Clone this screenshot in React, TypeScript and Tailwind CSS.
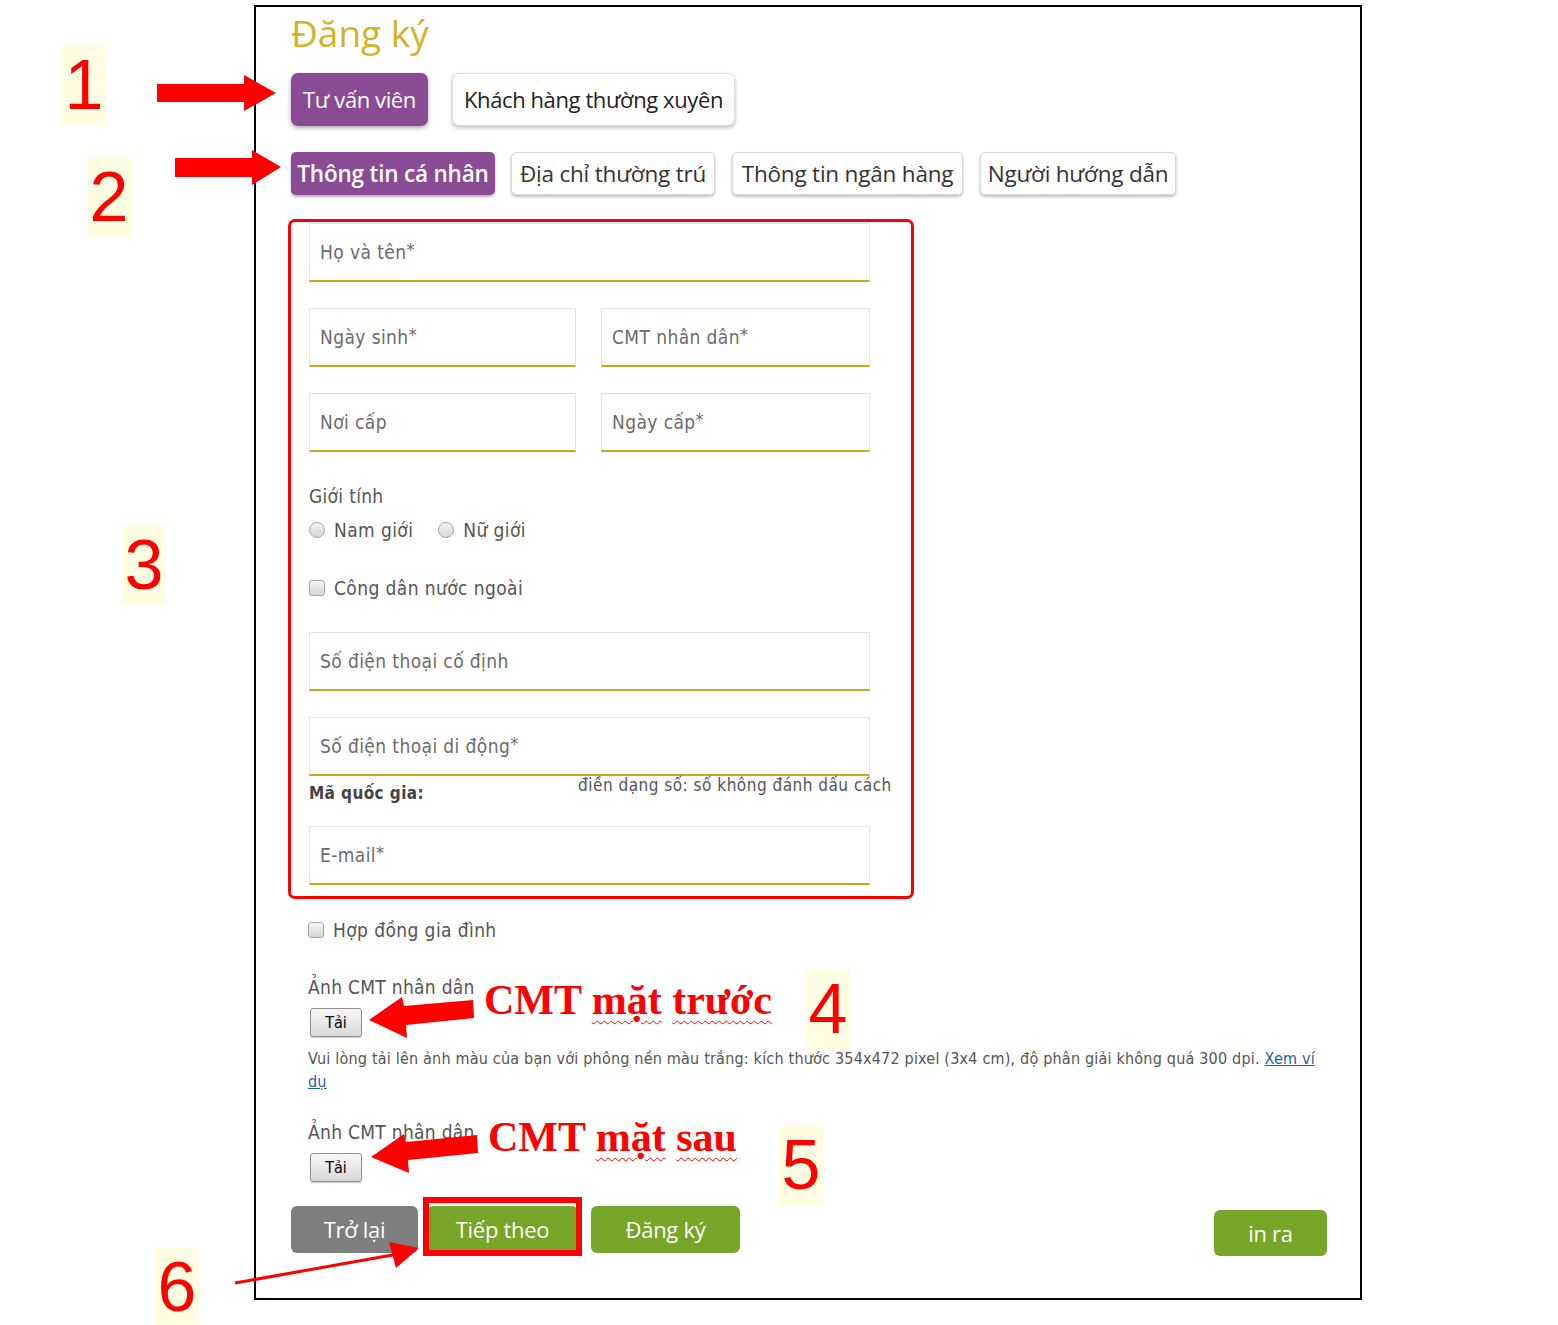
import React from 'react';

const uiFont = "font-['DejaVu_Sans_Condensed','Liberation_Sans',sans-serif]";
const btnFont = "font-['Open_Sans','Liberation_Sans',sans-serif]";

const Field: React.FC<{ label: string; star?: boolean; className?: string }> = ({ label, star, className = '' }) => (
  <div
    className={`h-[59px] flex items-center pl-[10px] border border-[#e4e4e4] border-b-2 border-b-[#c8a81c] bg-white text-[19px] tracking-[0.4px] text-[#6b6b6b] ${uiFont} ${className}`}
  >
    {label}
    {star && <span className="relative -top-[3px] text-[18px]">*</span>}
  </div>
);

const Radio: React.FC<{ label: string }> = ({ label }) => (
  <div className="flex items-center">
    <span className="w-[16px] h-[16px] rounded-full border border-[#a5a5a5] bg-gradient-to-b from-[#f4f4f4] to-[#d6d6d6]" />
    <span className="ml-[9px]">{label}</span>
  </div>
);

const Check: React.FC<{ label: string }> = ({ label }) => (
  <div className={`flex items-center h-[24px] text-[19px] tracking-[0.4px] text-[#555] ${uiFont}`}>
    <span className="w-[16px] h-[16px] rounded-[3px] border border-[#a5a5a5] bg-gradient-to-b from-[#f4f4f4] to-[#d6d6d6]" />
    <span className="ml-[9px]">{label}</span>
  </div>
);

const Upload: React.FC = () => (
  <>
    <div className={`h-[24px] leading-[24px] text-[19px] tracking-[0.3px] text-[#555] ${uiFont}`}>Ảnh CMT nhân dân</div>
    <div className="mt-[9px] ml-[2px] w-[52px] h-[29px] flex items-center justify-center rounded-[3px] border border-[#8f8f8f] bg-gradient-to-b from-[#f7f7f7] to-[#d9d9d9] shadow-[0_1px_1px_rgba(0,0,0,0.2)] text-[16px] text-black font-['DejaVu_Sans_Condensed',sans-serif]">
      Tải
    </div>
  </>
);

const NumberTag: React.FC<{ n: string; className: string }> = ({ n, className }) => (
  <div
    className={`absolute w-[44px] h-[80px] bg-[#fffde2] flex items-center justify-center text-[70px] leading-none text-[#ff0000] font-['Liberation_Sans',Arial,sans-serif] ${className}`}
  >
    {n}
  </div>
);

const App: React.FC = () => {
  return (
    <div className="relative w-[1558px] h-[1325px] overflow-hidden bg-white">
      {/* Screenshot frame */}
      <div className="ml-[254px] mt-[5px] w-[1108px] h-[1295px] border-2 border-black pl-[35px]">
        <h1 className={`h-[52px] leading-[52px] text-[37px] text-[#d4b22a] ${btnFont}`}>Đăng ký</h1>

        {/* Account type */}
        <div className={`mt-[14px] flex text-[22px] tracking-[-0.4px] ${btnFont}`}>
          <div className="w-[137px] h-[53px] flex items-center justify-center rounded-[7px] bg-[#8a4b94] text-white shadow-[0_2px_4px_rgba(0,0,0,0.35)]">
            Tư vấn viên
          </div>
          <div className="ml-[24px] w-[283px] h-[53px] flex items-center justify-center rounded-[7px] bg-white border border-[#dedede] text-[#222] shadow-[0_2px_4px_rgba(0,0,0,0.25)]">
            Khách hàng thường xuyên
          </div>
        </div>

        {/* Steps */}
        <div className={`mt-[26px] flex text-[22.5px] tracking-[-0.2px] ${btnFont}`}>
          <div className="w-[204px] h-[43px] flex items-center justify-center rounded-[5px] bg-[#8a4b94] text-white font-semibold shadow-[0_2px_3px_rgba(0,0,0,0.3)]">
            Thông tin cá nhân
          </div>
          <div className="ml-[16px] w-[204px] h-[43px] flex items-center justify-center rounded-[5px] bg-white border border-[#d6d6d6] text-[#333] shadow-[0_2px_3px_rgba(0,0,0,0.25)]">
            Địa chỉ thường trú
          </div>
          <div className="ml-[17px] w-[231px] h-[43px] flex items-center justify-center rounded-[5px] bg-white border border-[#d6d6d6] text-[#333] shadow-[0_2px_3px_rgba(0,0,0,0.25)]">
            Thông tin ngân hàng
          </div>
          <div className="ml-[17px] w-[196px] h-[43px] flex items-center justify-center rounded-[5px] bg-white border border-[#d6d6d6] text-[#333] shadow-[0_2px_3px_rgba(0,0,0,0.25)]">
            Người hướng dẫn
          </div>
        </div>

        {/* Personal info form */}
        <div className="mt-[28px] ml-[18px] w-[561px]">
          <Field label="Họ và tên" star />
          <div className="mt-[26px] grid grid-cols-[267px_269px] gap-x-[25px] gap-y-[26px]">
            <Field label="Ngày sinh" star />
            <Field label="CMT nhân dân" star />
            <Field label="Nơi cấp" />
            <Field label="Ngày cấp" star />
          </div>

          <div className={`mt-[32px] h-[24px] leading-[24px] text-[19px] tracking-[0.3px] text-[#555] ${uiFont}`}>Giới tính</div>
          <div className={`mt-[10px] h-[24px] flex items-center gap-[25px] text-[19px] tracking-[0.4px] text-[#555] ${uiFont}`}>
            <Radio label="Nam giới" />
            <Radio label="Nữ giới" />
          </div>

          <div className="mt-[34px]">
            <Check label="Công dân nước ngoài" />
          </div>

          <Field label="Số điện thoại cố định" className="mt-[32px]" />
          <Field label="Số điện thoại di động" star className="mt-[26px]" />

          <div className={`flex w-[620px] h-[30px] ${uiFont}`}>
            <div className="w-[269px] mt-[8px] leading-[18px] text-[17px] tracking-[0.4px] font-bold text-[#444]">Mã quốc gia:</div>
            <div className="leading-[18px] text-[17px] tracking-[0.5px] text-[#555] whitespace-nowrap">điền dạng số: số không đánh dấu cách</div>
          </div>

          <Field label="E-mail" star className="mt-[20px]" />
        </div>

        {/* Extra */}
        <div className="ml-[17px]">
          <div className="mt-[33px]">
            <Check label="Hợp đồng gia đình" />
          </div>

          <div className="mt-[33px]">
            <Upload />
          </div>
          <p className={`mt-[10px] w-[1030px] text-[16px] tracking-[0.2px] leading-[23px] text-[#555] whitespace-nowrap ${uiFont}`}>
            Vui lòng tải lên ảnh màu của bạn với phông nền màu trắng: kích thước 354x472 pixel (3x4 cm), độ phân giải không quá 300 dpi.{' '}
            <a className="text-[#1f5fa8] underline">Xem ví</a>
            <br />
            <a className="text-[#1f5fa8] underline">dụ</a>
          </p>

          <div className="mt-[27px]">
            <Upload />
          </div>
        </div>

        {/* Actions */}
        <div className={`mt-[24px] w-[1036px] flex items-start text-[22px] text-white tracking-[-0.3px] ${btnFont}`}>
          <div className="w-[127px] h-[47px] flex items-center justify-center rounded-[6px] bg-[#7e7e7e]">Trở lại</div>
          <div className="ml-[9px] w-[151px] h-[47px] flex items-center justify-center rounded-[6px] bg-[#77a528]">Tiếp theo</div>
          <div className="ml-[13px] w-[149px] h-[47px] flex items-center justify-center rounded-[6px] bg-[#77a528]">Đăng ký</div>
          <div className="ml-auto mt-[4px] w-[113px] h-[46px] flex items-center justify-center rounded-[6px] bg-[#77a528]">in ra</div>
        </div>
      </div>

      {/* Annotations */}
      <div className="absolute left-[288px] top-[219px] w-[626px] h-[680px] border-[3px] border-[#ff0000] rounded-[7px]" />
      <div className="absolute left-[423px] top-[1197px] w-[159px] h-[59px] border-[6px] border-[#ff0000]" />

      <NumberTag n="1" className="left-[62px] top-[45px]" />
      <NumberTag n="2" className="left-[87px] top-[157px]" />
      <NumberTag n="3" className="left-[122px] top-[525px]" />
      <NumberTag n="4" className="left-[806px] top-[969px]" />
      <NumberTag n="5" className="left-[779px] top-[1125px]" />
      <NumberTag n="6" className="left-[155px] top-[1247px] h-[76px]" />

      <svg className="absolute left-0 top-0 pointer-events-none" width="1558" height="1325" viewBox="0 0 1558 1325">
        <polygon points="157,84 244,84 244,75 276,93 244,111 244,102 157,102" fill="#ff0000" />
        <polygon points="175,158 252,158 252,150 281,167 252,185 252,177 175,177" fill="#ff0000" />
        <polygon points="473,1000 404,1006 402,997 369,1020 407,1038 406,1025 474,1018" fill="#ff0000" />
        <polygon points="477,1135 406,1142 404,1134 371,1157 409,1173 408,1160 478,1153" fill="#ff0000" />
        <line x1="235" y1="1283" x2="398" y2="1254" stroke="#ff0000" strokeWidth="3" />
        <polygon points="419,1248 389,1242 396,1268" fill="#ff0000" />
      </svg>

      <div className="absolute left-[484px] top-[975px] text-[42px] leading-[50px] font-bold text-[#ff0000] font-['Liberation_Serif','Times_New_Roman',serif] whitespace-nowrap">
        CMT <span className="underline decoration-wavy decoration-[#ff0000] decoration-1 underline-offset-[6px]">mặt</span>{' '}
        <span className="underline decoration-wavy decoration-[#ff0000] decoration-1 underline-offset-[6px]">trước</span>
      </div>
      <div className="absolute left-[488px] top-[1112px] text-[42px] leading-[50px] font-bold text-[#ff0000] font-['Liberation_Serif','Times_New_Roman',serif] whitespace-nowrap">
        CMT <span className="underline decoration-wavy decoration-[#ff0000] decoration-1 underline-offset-[6px]">mặt</span>{' '}
        <span className="underline decoration-wavy decoration-[#ff0000] decoration-1 underline-offset-[6px]">sau</span>
      </div>
    </div>
  );
};

export default App;
